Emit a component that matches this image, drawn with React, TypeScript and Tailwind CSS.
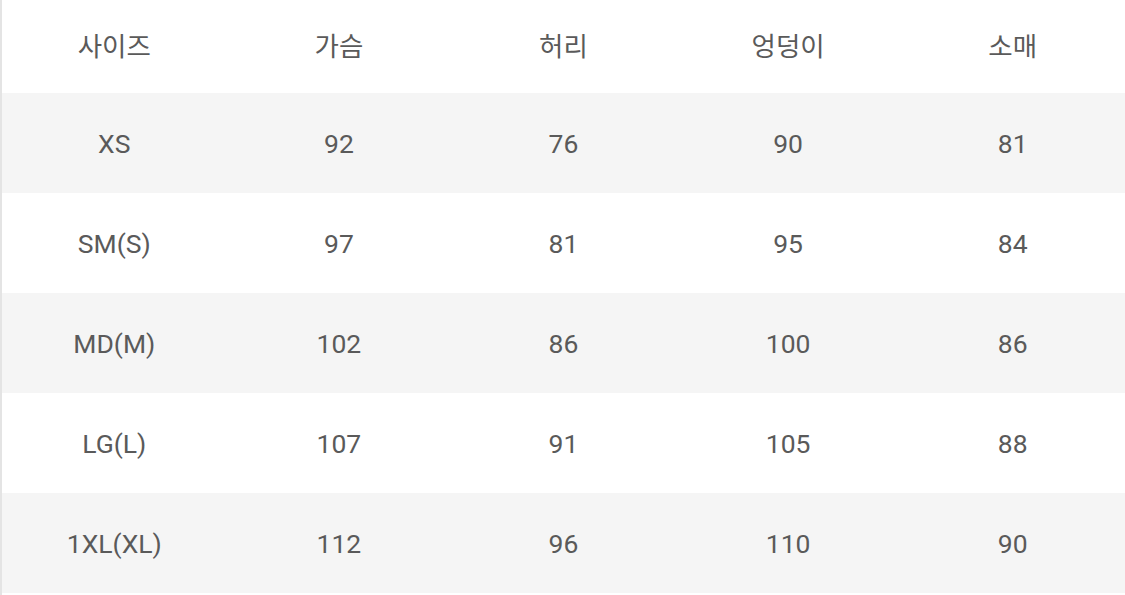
import React from 'react';

const headers = ['사이즈', '가슴', '허리', '엉덩이', '소매'];

const rows: string[][] = [
  ['XS', '92', '76', '90', '81'],
  ['SM(S)', '97', '81', '95', '84'],
  ['MD(M)', '102', '86', '100', '86'],
  ['LG(L)', '107', '91', '105', '88'],
  ['1XL(XL)', '112', '96', '110', '90'],
];

export default function App() {
  return (
    <div
      className="w-[1125px] h-[595px] overflow-hidden bg-white border-l-2 border-[#e4e4e4] text-[#5a5a5a] text-[26.5px]"
      style={{ fontFamily: "Roboto, 'Noto Sans CJK KR', sans-serif" }}
    >
      <div className="grid grid-cols-5 h-[93px] items-center text-center">
        {headers.map((h) => (
          <div key={h}>{h}</div>
        ))}
      </div>
      {rows.map((row, i) => (
        <div
          key={row[0]}
          className={`grid grid-cols-5 h-[100px] items-center text-center ${
            i % 2 === 0 ? 'bg-[#f5f5f5]' : 'bg-white'
          }`}
        >
          {row.map((cell, j) => (
            <div key={j} className="pt-[2px]">{cell}</div>
          ))}
        </div>
      ))}
    </div>
  );
}
